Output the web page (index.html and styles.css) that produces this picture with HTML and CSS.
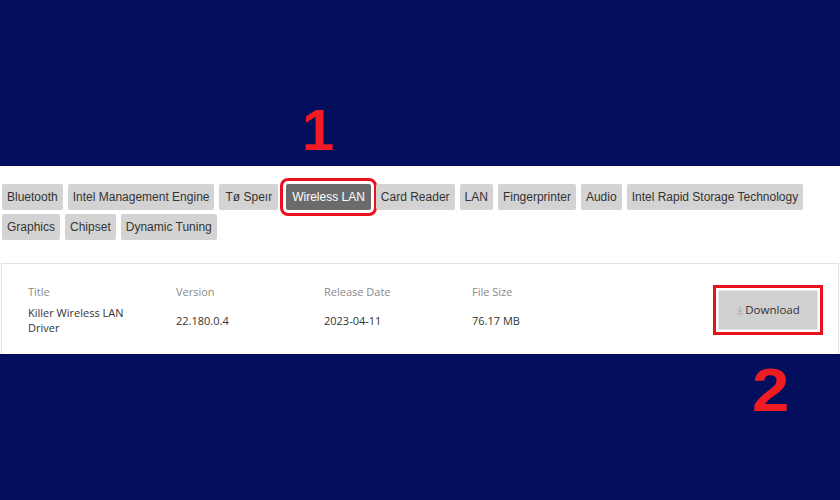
FILE: index.html
```html
<!DOCTYPE html>
<html lang="en">
<head>
  <meta charset="UTF-8">
  <meta name="viewport" content="width=device-width, initial-scale=1.0">
  <title>Drivers</title>
  <link rel="stylesheet" href="styles.css">
</head>
<body>
  <div class="stage">
    <span class="step step-one">1</span>

    <div class="panel">
      <div class="tabs">
        <button class="tab">Bluetooth</button>
        <button class="tab">Intel Management Engine</button>
        <button class="tab tab-wide">Tø Speır</button>
        <button class="tab active">Wireless LAN</button>
        <button class="tab">Card Reader</button>
        <button class="tab">LAN</button>
        <button class="tab">Fingerprinter</button>
        <button class="tab">Audio</button>
        <button class="tab">Intel Rapid Storage Technology</button>
        <button class="tab">Graphics</button>
        <button class="tab">Chipset</button>
        <button class="tab">Dynamic Tuning</button>
      </div>

      <div class="file-card">
        <div class="file-table">
          <div class="head">Title</div>
          <div class="head">Version</div>
          <div class="head">Release Date</div>
          <div class="head">File Size</div>
          <div class="cell-action">
            <button class="download">
              <svg width="8" height="10" viewBox="0 0 8 10"><path d="M4 1v6M1.5 4.8L4 7.3l2.5-2.5M1 9h6" fill="none" stroke="#aaa" stroke-width="1"/></svg>Download
            </button>
          </div>
          <div class="cell title">Killer Wireless LAN Driver</div>
          <div class="cell">22.180.0.4</div>
          <div class="cell">2023-04-11</div>
          <div class="cell">76.17 MB</div>
        </div>
      </div>
    </div>

    <span class="step step-two">2</span>
  </div>
</body>
</html>
```
FILE: styles.css
```css
body {
  margin: 0;
  background-color: #030f5c;
  font-family: 'Liberation Sans', Arial, sans-serif;
}

.stage {
  position: relative;
  height: 500px;
  padding-top: 166px;
  box-sizing: border-box;
}

/* red annotation numbers */
.step {
  position: absolute;
  font-family: 'Liberation Sans', Arial, sans-serif;
  font-weight: bold;
  font-size: 58px;
  line-height: 1;
  color: #f01c24;
}

.step-one {
  left: 302px;
  top: 101px;
}

.step-two {
  left: 752px;
  top: 360px;
  font-size: 61px;
  transform: scaleX(1.1);
  transform-origin: left top;
}

.panel {
  background-color: #ffffff;
  height: 188px;
  overflow: hidden;
  padding-top: 18px;
  box-sizing: border-box;
}

.tabs {
  display: flex;
  flex-wrap: wrap;
  gap: 4px 5px;
  padding-left: 2px;
}

.tab {
  height: 26px;
  padding: 0 5px;
  border: none;
  border-radius: 2px;
  background-color: #d3d3d3;
  color: #333;
  font-family: 'Liberation Sans', Arial, sans-serif;
  font-size: 12px;
}

.tab-wide {
  padding: 0 6px;
}

.tab.active {
  background-color: #6b6b6b;
  color: #fff;
  margin-left: 3px;
  padding: 0 6px;
  outline: 3px solid #e8121c;
  outline-offset: 3px;
}

.file-card {
  margin: 23px 1px 0 1px;
  border: 1px solid #e2e2e2;
  height: 120px;
  padding: 20px 20px 0 26px;
}

.file-table {
  display: grid;
  grid-template-columns: 148px 148px 148px 1fr 100px;
  grid-template-rows: 16px auto;
  row-gap: 5px;
  align-items: center;
  font-family: 'Open Sans', 'Noto Sans', sans-serif;
  font-size: 11px;
}

.head {
  color: #8a8a8a;
  align-self: start;
}

.cell {
  color: #333;
  line-height: 15px;
}

.cell.title {
  max-width: 100px;
}

.cell-action {
  grid-row: 1 / span 2;
  grid-column: 5;
}

.download {
  width: 100px;
  height: 40px;
  border: 1px solid #e8e8e8;
  background-color: #d0d0d0;
  color: #333;
  font-family: 'Open Sans', sans-serif;
  font-size: 11.5px;
  outline: 3px solid #e8121c;
  outline-offset: 2px;
  display: flex;
  align-items: center;
  justify-content: center;
  gap: 1px;
}
```
